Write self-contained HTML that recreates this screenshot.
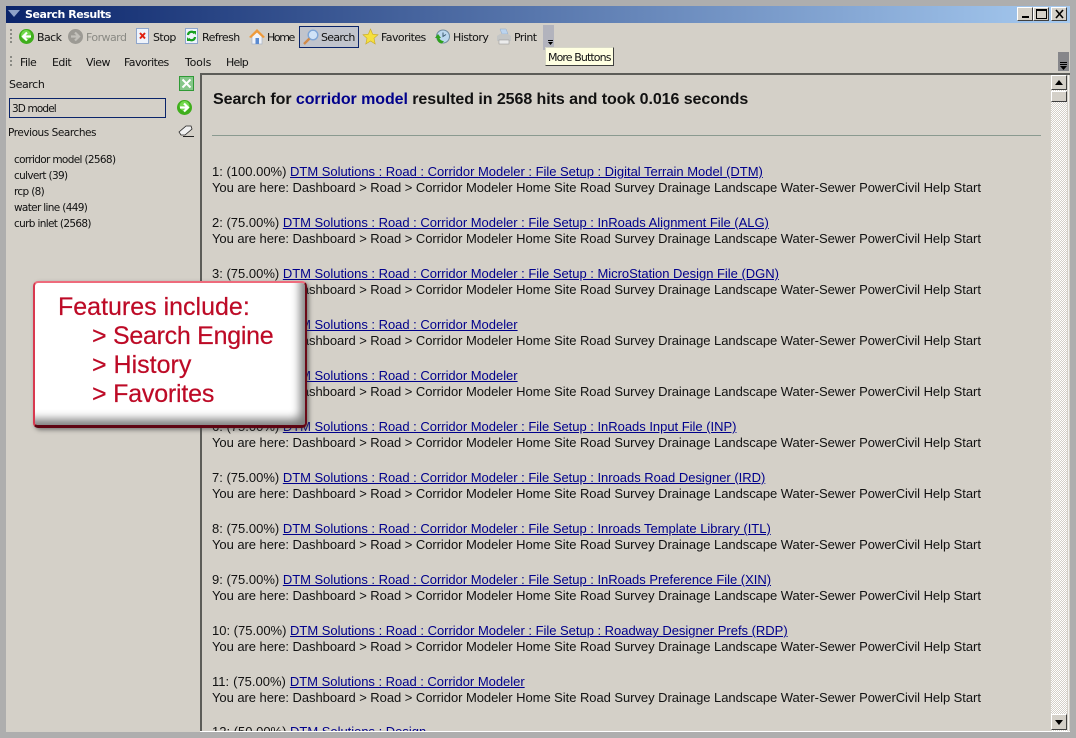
<!DOCTYPE html>
<html><head><meta charset="utf-8"><title>Search Results</title>
<style>
html,body{margin:0;padding:0;width:1076px;height:738px;overflow:hidden;background:#aeaeae}
#w{position:absolute;left:6px;top:6px;width:1064px;height:726px;background:#d4d0c8;overflow:hidden}
.a{position:absolute;white-space:nowrap}
.u{font:11px/14px "DejaVu Sans",sans-serif;color:#111;letter-spacing:-.55px;position:absolute;white-space:nowrap}
.l{font-size:10.5px}
.r{position:absolute;left:212px;font:13px/16px "Liberation Sans",Arial,sans-serif;color:#111;white-space:nowrap;letter-spacing:-.05px;margin-top:1px}
.p{letter-spacing:0}
.r a{color:#00008b;text-decoration:underline;letter-spacing:-.02px;word-spacing:0}
svg{position:absolute;overflow:visible}
.btn{position:absolute;background:#d4d0c8;border:1px solid;border-color:#fff #404040 #404040 #fff;box-sizing:border-box}
</style></head><body>
<div id="w"></div>
<!-- title bar -->
<div class="a" style="left:6px;top:6px;width:1064px;height:17px;background:linear-gradient(90deg,#0a246a,#a6caf0)"></div>
<svg style="left:7px;top:10px" width="14" height="8"><path d="M1 0H13L7 7Z" fill="#8ea2c8"/></svg>
<div class="a" style="left:25px;top:7px;font:bold 11px/15px 'DejaVu Sans',sans-serif;color:#fff;letter-spacing:-.45px">Search Results</div>
<div class="btn" style="left:1017px;top:7px;width:16px;height:14px"><div class="a" style="left:4px;top:8px;width:7px;height:2px;background:#000"></div></div>
<div class="btn" style="left:1033px;top:7px;width:16px;height:14px"><div class="a" style="left:2px;top:1px;width:9px;height:7px;border:1px solid #000;border-top-width:2px"></div></div>
<div class="btn" style="left:1051px;top:7px;width:16px;height:14px"><svg style="left:3px;top:2px" width="9" height="8"><path d="M1 0L8 8M8 0L1 8" stroke="#000" stroke-width="1.6"/></svg></div>

<!-- grips -->
<div class="a" style="left:10px;top:29px;width:2px;height:15px;background:repeating-linear-gradient(#8a8a84 0 2px,transparent 2px 4px)"></div>
<div class="a" style="left:10px;top:56px;width:2px;height:11px;background:repeating-linear-gradient(#8a8a84 0 2px,transparent 2px 4px)"></div>

<!-- toolbar -->
<svg style="left:19px;top:29px" width="15" height="15"><circle cx="7.5" cy="7.5" r="7.5" fill="#3fae1c"/><circle cx="7" cy="6" r="5" fill="#72d84c"/><path d="M12 7.5H5M8 3.5L4 7.5L8 11.5" stroke="#fff" stroke-width="2.2" fill="none"/></svg>
<div class="u" style="left:37px;top:31px">Back</div>
<svg style="left:68px;top:29px" width="15" height="15"><circle cx="7.5" cy="7.5" r="7.5" fill="#9c9a94"/><path d="M3 7.5H10M7 3.5L11 7.5L7 11.5" stroke="#c2c0ba" stroke-width="2.2" fill="none"/></svg>
<div class="u" style="left:86px;top:31px;color:#8a8a84">Forward</div>
<svg style="left:136px;top:28px" width="13" height="16"><rect x=".5" y=".5" width="12" height="15" fill="#eef3fb" stroke="#8fa6cc"/><path d="M4 5L9 10.500M9 5L4 10.500" stroke="#e02010" stroke-width="2"/></svg>
<div class="u" style="left:153px;top:31px">Stop</div>
<svg style="left:185px;top:28px" width="13" height="16"><rect x=".5" y=".5" width="12" height="15" fill="#eef3fb" stroke="#8fa6cc"/><path d="M3 7A3.500 3.500 0 0 1 9.500 5.500M10 9A3.500 3.500 0 0 1 3.500 10.500" stroke="#18a020" stroke-width="2.200" fill="none"/><path d="M8 3H11V7ZM5 13H2V9Z" fill="#18a020"/></svg>
<div class="u" style="left:202px;top:31px">Refresh</div>
<svg style="left:249px;top:28px" width="16" height="17"><path d="M3 8V16H13V8L8 4Z" fill="#f1f3f8" stroke="#a8b4c8" stroke-width=".7"/><path d="M0 9L8 1L16 9L14 10L8 4.500L2 10Z" fill="#ef9a3a"/><rect x="6.500" y="10" width="3.500" height="6" fill="#5a8ad0"/></svg>
<div class="u" style="left:267px;top:31px;letter-spacing:-1.4px">Home</div>
<div class="a" style="left:299px;top:26px;width:60px;height:22px;box-sizing:border-box;background:#c1c4cc;border:1px solid #0a246a"></div>
<svg style="left:303px;top:29px" width="16" height="16"><circle cx="10" cy="6" r="4.800" fill="#cfe2f7" stroke="#7ea5d6" stroke-width="1.400"/><path d="M6.500 9.500L1 15" stroke="#d08a48" stroke-width="2.400"/></svg>
<div class="u" style="left:321px;top:31px;letter-spacing:-.7px">Search</div>
<svg style="left:363px;top:29px" width="15" height="15"><path d="M7.500 0L9.700 5.200L15 5.700L11 9.300L12.200 15L7.500 12L2.800 15L4 9.300L0 5.700L5.300 5.200Z" fill="#f5e040" stroke="#c9a820" stroke-width=".6"/></svg>
<div class="u" style="left:381px;top:31px">Favorites</div>
<svg style="left:435px;top:29px" width="15" height="15"><circle cx="8" cy="7.500" r="6.500" fill="#bcd8ee" stroke="#6f8a9e"/><path d="M8 3.500V7.500L11 5.500" stroke="#3a5a70" fill="none"/><path d="M0 9L3 5L6 9H4.500C5 11 7 12 9 12L7 14.500C4 14.500 2 12 2 9Z" fill="#2fa01e"/></svg>
<div class="u" style="left:453px;top:31px">History</div>
<svg style="left:496px;top:29px" width="16" height="16"><path d="M4 0H10L12 5H6Z" fill="#bcd4ee" stroke="#8ea8c8" stroke-width=".5"/><path d="M1 7L4 5H12L15 7V12H1Z" fill="#c4c6c6"/><rect x="3" y="11" width="10" height="4" fill="#ececec" stroke="#909090" stroke-width=".5"/></svg>
<div class="u" style="left:514px;top:31px">Print</div>
<div class="a" style="left:543px;top:25px;width:11px;height:25px;background:#b2b3bd"></div>
<div class="a" style="left:548px;top:40px;width:5px;height:1px;background:#000"></div>
<svg style="left:548px;top:42px" width="5" height="3"><path d="M0 0H5L2.500 3Z"/></svg>
<div class="a" style="left:545px;top:47px;width:69px;height:19px;box-sizing:border-box;background:#ffffe1;border-top:1px solid #d8d8c8;border-left:1px solid #d8d8c8;border-right:1px solid #404040;border-bottom:1px solid #404040;font:11px/19px 'DejaVu Sans',sans-serif;color:#111;letter-spacing:-.9px;padding-left:2px">More Buttons</div>

<!-- menu -->
<div class="u" style="left:20px;top:56px">File</div>
<div class="u" style="left:52px;top:56px">Edit</div>
<div class="u" style="left:86px;top:56px">View</div>
<div class="u" style="left:124px;top:56px">Favorites</div>
<div class="u" style="left:185px;top:56px;letter-spacing:-.2px">Tools</div>
<div class="u" style="left:226px;top:56px;letter-spacing:-.8px">Help</div>
<div class="a" style="left:1058px;top:52px;width:11px;height:19px;background:#86868a"></div>
<div class="a" style="left:1060px;top:62px;width:7px;height:1px;background:#000"></div>
<div class="a" style="left:1060px;top:64px;width:7px;height:1px;background:#000"></div>
<svg style="left:1060px;top:66px" width="7" height="4"><path d="M0 0H7L3.500 4Z"/></svg>

<!-- left panel -->
<div class="u" style="left:9px;top:78px;letter-spacing:-.4px">Search</div>
<svg style="left:179px;top:76px" width="15" height="15"><rect width="15" height="15" fill="#2f9a35"/><rect x="1" y="1" width="13" height="13" fill="#86c78a"/><path d="M3.500 3.500L11.500 11.500M11.500 3.500L3.500 11.500" stroke="#fff" stroke-width="2"/></svg>
<div class="a" style="left:9px;top:98px;width:157px;height:20px;box-sizing:border-box;border:1px solid #0a246a"></div>
<div class="u l" style="left:12px;top:102px;letter-spacing:-.87px">3D model</div>
<svg style="left:177px;top:100px" width="15" height="15"><circle cx="7.500" cy="7.500" r="7.500" fill="#3fae1c"/><circle cx="7.500" cy="6" r="5" fill="#74d84e"/><path d="M3 7.500H10M7 3.500L11 7.500L7 11.500" stroke="#fff" stroke-width="2.200" fill="none"/></svg>
<div class="u l" style="left:8px;top:126px;letter-spacing:-.45px">Previous Searches</div>
<svg style="left:179px;top:125px" width="15" height="13"><path d="M0 7L7 1L12 1L13 4L6 10L2 10Z" fill="#f0f0f0" stroke="#222" stroke-width=".8"/><path d="M4 11.500H15" stroke="#222"/></svg>
<div class="u l" style="left:14px;top:153px;letter-spacing:-.66px">corridor model (2568)</div>
<div class="u l" style="left:14px;top:169px;letter-spacing:-.66px">culvert (39)</div>
<div class="u l" style="left:14px;top:185px;letter-spacing:-.66px">rcp (8)</div>
<div class="u l" style="left:14px;top:201px;letter-spacing:-.66px">water line (449)</div>
<div class="u l" style="left:14px;top:217px;letter-spacing:-.66px">curb inlet (2568)</div>

<!-- content pane -->
<div class="a" style="left:200px;top:73px;width:870px;height:2px;background:#5c5c58"></div>
<div class="a" style="left:200px;top:73px;width:2px;height:658px;background:#5c5c58"></div>
<div class="a" style="left:200px;top:731px;width:870px;height:1px;background:#fff"></div>
<div class="a" style="left:1068px;top:75px;width:1px;height:657px;background:#f4f3f0"></div>

<div class="a" style="left:213px;top:91px;font:bold 16px/18px 'Liberation Sans',Arial,sans-serif;color:#111;letter-spacing:-.065px">Search for <span style="color:#00008b">corridor model</span> resulted in 2568 hits and took 0.016 seconds</div>
<div class="a" style="left:212px;top:135px;width:829px;height:1px;background:#8a9a90"></div>

<div class="r p" style="top:163px">1: (100.00%) <a>DTM Solutions : Road : Corridor Modeler : File Setup : Digital Terrain Model (DTM)</a></div>
<div class="r" style="top:179px">You are here: Dashboard &gt; Road &gt; Corridor Modeler Home Site Road Survey Drainage Landscape Water-Sewer PowerCivil Help Start</div>
<div class="r p" style="top:214px">2: (75.00%) <a>DTM Solutions : Road : Corridor Modeler : File Setup : InRoads Alignment File (ALG)</a></div>
<div class="r" style="top:230px">You are here: Dashboard &gt; Road &gt; Corridor Modeler Home Site Road Survey Drainage Landscape Water-Sewer PowerCivil Help Start</div>
<div class="r p" style="top:265px">3: (75.00%) <a>DTM Solutions : Road : Corridor Modeler : File Setup : MicroStation Design File (DGN)</a></div>
<div class="r" style="top:281px">You are here: Dashboard &gt; Road &gt; Corridor Modeler Home Site Road Survey Drainage Landscape Water-Sewer PowerCivil Help Start</div>
<div class="r p" style="top:316px">4: (75.00%) <a>DTM Solutions : Road : Corridor Modeler</a></div>
<div class="r" style="top:332px">You are here: Dashboard &gt; Road &gt; Corridor Modeler Home Site Road Survey Drainage Landscape Water-Sewer PowerCivil Help Start</div>
<div class="r p" style="top:367px">5: (75.00%) <a>DTM Solutions : Road : Corridor Modeler</a></div>
<div class="r" style="top:383px">You are here: Dashboard &gt; Road &gt; Corridor Modeler Home Site Road Survey Drainage Landscape Water-Sewer PowerCivil Help Start</div>
<div class="r p" style="top:418px">6: (75.00%) <a>DTM Solutions : Road : Corridor Modeler : File Setup : InRoads Input File (INP)</a></div>
<div class="r" style="top:434px">You are here: Dashboard &gt; Road &gt; Corridor Modeler Home Site Road Survey Drainage Landscape Water-Sewer PowerCivil Help Start</div>
<div class="r p" style="top:469px">7: (75.00%) <a>DTM Solutions : Road : Corridor Modeler : File Setup : Inroads Road Designer (IRD)</a></div>
<div class="r" style="top:485px">You are here: Dashboard &gt; Road &gt; Corridor Modeler Home Site Road Survey Drainage Landscape Water-Sewer PowerCivil Help Start</div>
<div class="r p" style="top:520px">8: (75.00%) <a>DTM Solutions : Road : Corridor Modeler : File Setup : Inroads Template Library (ITL)</a></div>
<div class="r" style="top:536px">You are here: Dashboard &gt; Road &gt; Corridor Modeler Home Site Road Survey Drainage Landscape Water-Sewer PowerCivil Help Start</div>
<div class="r p" style="top:571px">9: (75.00%) <a>DTM Solutions : Road : Corridor Modeler : File Setup : InRoads Preference File (XIN)</a></div>
<div class="r" style="top:587px">You are here: Dashboard &gt; Road &gt; Corridor Modeler Home Site Road Survey Drainage Landscape Water-Sewer PowerCivil Help Start</div>
<div class="r p" style="top:622px">10: (75.00%) <a>DTM Solutions : Road : Corridor Modeler : File Setup : Roadway Designer Prefs (RDP)</a></div>
<div class="r" style="top:638px">You are here: Dashboard &gt; Road &gt; Corridor Modeler Home Site Road Survey Drainage Landscape Water-Sewer PowerCivil Help Start</div>
<div class="r p" style="top:673px;word-spacing:.4px">11: (75.00%) <a>DTM Solutions : Road : Corridor Modeler</a></div>
<div class="r" style="top:689px">You are here: Dashboard &gt; Road &gt; Corridor Modeler Home Site Road Survey Drainage Landscape Water-Sewer PowerCivil Help Start</div>
<div class="a" style="left:212px;top:720px;width:800px;height:11px;overflow:hidden"><div class="r p" style="left:0;top:3px">12: (50.00%) <a>DTM Solutions : Design</a></div></div>

<!-- scrollbar -->
<div class="a" style="left:1051px;top:75px;width:16px;height:656px;background-color:#f2f0ec;background-image:repeating-conic-gradient(#d4d0c8 0 25%,#fff 0 50%);background-size:2px 2px"></div>
<div class="btn" style="left:1051px;top:75px;width:16px;height:15px"><svg style="left:3px;top:4px" width="8" height="5"><path d="M0 5H8L4 0Z"/></svg></div>
<div class="btn" style="left:1051px;top:91px;width:16px;height:11px"></div>
<div class="btn" style="left:1051px;top:714px;width:16px;height:16px"><svg style="left:3px;top:5px" width="8" height="5"><path d="M0 0H8L4 5Z"/></svg></div>

<!-- callout -->
<div class="a" style="left:33px;top:281px;width:274px;height:147px;box-sizing:border-box;background:#fff;border-radius:5px;border:2px solid #d8394f;border-top-color:#ee6b7c;border-bottom:3px solid #5e0412;border-right:2px solid #6b0a18;box-shadow:inset -9px -10px 9px -4px #808080,2px 2px 4px rgba(60,60,60,.6)"></div>
<div class="a" style="left:58px;top:293px;font:25px/29px 'Liberation Sans',Arial,sans-serif;color:#bd0a26;-webkit-text-stroke:.2px #bd0a26">Features include:<br><span style="margin-left:34px;letter-spacing:-.28px">&gt; Search Engine</span><br><span style="margin-left:34px">&gt; History</span><br><span style="margin-left:34px;letter-spacing:-.2px">&gt; Favorites</span></div>
</body></html>
